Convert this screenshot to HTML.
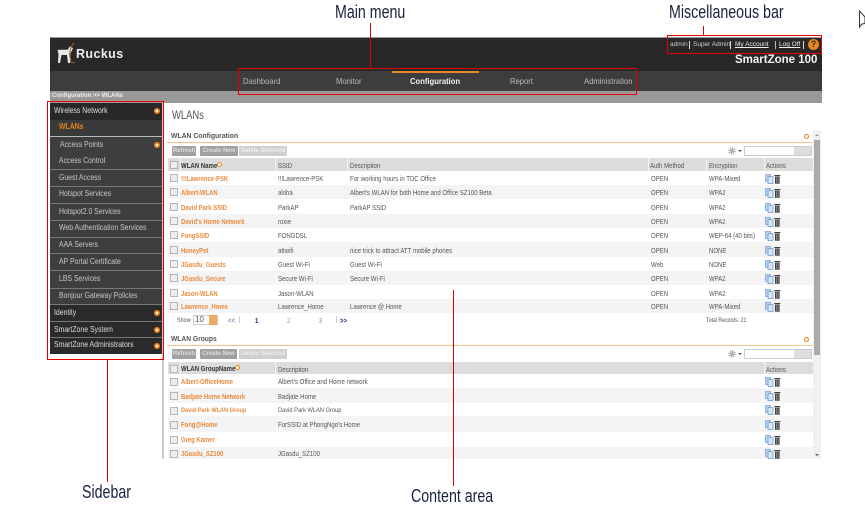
<!DOCTYPE html>
<html><head><meta charset="utf-8"><style>
html,body{margin:0;padding:0;background:#fff}
#p{position:relative;width:865px;height:525px;overflow:hidden;background:#fff;font-family:"Liberation Sans",Arial,sans-serif;color:#444}
#p div,#p span.a,#p svg.a{position:absolute}
.t{position:absolute;white-space:nowrap;line-height:10px;font-size:7px;color:#555;transform-origin:0 50%}
.n{position:absolute;white-space:nowrap;line-height:12px;font-size:8.5px;color:#bbb;top:75px;transform:scaleX(.9);transform-origin:0 50%}
.s{position:absolute;white-space:nowrap;left:58px;line-height:12px;font-size:8px;color:#c8c8c8;transform:scaleX(.86);transform-origin:0 50%}
.h{position:absolute;white-space:nowrap;left:54px;line-height:12px;font-size:8px;color:#ddd;transform:scaleX(.86);transform-origin:0 50%}
.l{position:absolute;left:50px;width:113px;height:1px;background:#777}
.r{position:absolute;left:168px;width:645px}
.cb{position:absolute;left:170px;width:6px;height:6px;border:1px solid #b5b5b5;background:#eee}
.o{position:absolute;white-space:nowrap;left:181px;line-height:10px;font-size:7.2px;font-weight:bold;color:#e98a3e;transform:scaleX(.82);transform-origin:0 50%;margin-top:.5px}
.k{position:absolute;white-space:nowrap;line-height:10px;font-size:7.2px;color:#555;transform:scaleX(.84);transform-origin:0 50%;margin-top:.5px}
.ic{position:absolute;left:765px;width:16px;height:10px}
.b{position:absolute;height:10px;line-height:10px;font-size:6px;font-weight:bold;text-align:center;color:#ddd;background:#a0a0a0;border-radius:1px;white-space:nowrap;overflow:hidden}
.red{position:absolute;border:1px solid #e80000;box-sizing:border-box}
.rl{position:absolute;width:1px;background:#d80000}
.lab{position:absolute;white-space:nowrap;font-size:18px;line-height:20px;color:#16233d;transform:scaleX(.79);transform-origin:0 0}
.dot{position:absolute;width:3px;height:3px;border-radius:50%;background:#fff;border:1.5px solid #ee7f1a;box-sizing:content-box}
.sd{position:absolute;left:154px;width:6px;height:6px;border-radius:50%;background:#f08a24}
.sd:after{content:"";position:absolute;left:2px;top:2px;width:2px;height:2px;background:#fff}
.hs{position:absolute;width:1px;background:#f4f4f4}
</style></head><body><div id="p">
<svg width="0" height="0" style="position:absolute"><defs>
<symbol id="i" viewBox="0 0 16 10"><rect x="0.5" y="0.5" width="5" height="7" fill="#bcd3ee" stroke="#7da6d8" stroke-width=".8"/><rect x="3" y="2.500" width="5" height="7" fill="#d5e4f6" stroke="#6f9ad2" stroke-width=".8"/><path d="M9.300 1h6v1.200h-6zM10 2.800h4.600v6.900h-4.600z" fill="#3e3e3e"/><path d="M11.500 3.300v6M13.100 3.300v6" stroke="#b0b0b0" stroke-width=".6"/></symbol>
<symbol id="g" viewBox="0 0 9 9"><circle cx="4.500" cy="4.500" r="2.500" fill="#b5b5b5"/><circle cx="4.500" cy="4.500" r="3.500" fill="none" stroke="#a8a8a8" stroke-width="1.600" stroke-dasharray="1.500 1.200"/></symbol>
</defs></svg>

<!-- header -->
<div style="left:50px;top:37px;width:772px;height:1px;background:#999"></div>
<div style="left:50px;top:38px;width:772px;height:33px;background:#282828"></div>
<div style="left:50px;top:71px;width:772px;height:20px;background:#3d3d3d"></div>
<div style="left:50px;top:91px;width:772px;height:12px;background:#999"></div>
<svg class="a" style="left:56px;top:42px" width="22" height="24" viewBox="0 0 22 24"><path d="M1.500 8C4 7.500 9 8 12 7.500L13.500 4.500 17 6 16 8.500 14.500 11 14 21H12L11 13H5.500L4 21H2L2.500 12Z" fill="#e8e8e8"/><path d="M18 1L15 5 13.500 12 15 20 19 21" stroke="#a5672a" stroke-width="1" fill="none"/></svg>
<span class="t" style="left:76px;top:46px;font-size:12.500px;line-height:16px;color:#eee;letter-spacing:.4px;font-weight:bold">Ruckus</span>

<span class="t" style="left:670px;top:40px;color:#ccc;font-size:6.500px">admin</span>
<div style="left:689px;top:41px;width:1px;height:8px;background:#ddd"></div>
<span class="t" style="left:693px;top:40px;color:#ccc;font-size:6.500px">Super Admin</span>
<div style="left:730px;top:41px;width:1px;height:8px;background:#ddd"></div>
<span class="t" style="left:735px;top:40px;color:#eee;font-size:6.500px;text-decoration:underline">My Account</span>
<div style="left:775px;top:41px;width:1px;height:8px;background:#bbb"></div>
<span class="t" style="left:779px;top:40px;color:#eee;font-size:6.500px;text-decoration:underline">Log Off</span>
<div style="left:803px;top:41px;width:1px;height:8px;background:#ddd"></div>
<div style="left:808px;top:39px;width:11px;height:11px;border-radius:50%;background:#e58a23;color:#3a2a10;font-size:9px;font-weight:bold;line-height:11px;text-align:center">?</div>
<span class="t" style="left:735px;top:54px;color:#f2f2f2;font-size:11.500px;line-height:13px;font-weight:bold">SmartZone 100</span>

<div style="left:392px;top:71px;width:87px;height:2px;background:#e98a2a"></div>
<span class="n" style="left:243px">Dashboard</span>
<span class="n" style="left:336px">Monitor</span>
<span class="n" style="left:410px;color:#f2f2f2;font-weight:bold">Configuration</span>
<span class="n" style="left:510px">Report</span>
<span class="n" style="left:584px">Administration</span>
<span class="t" style="left:52px;top:91px;color:#eee;font-weight:bold;font-size:6px">Configuration &gt;&gt; WLANs</span>

<!-- sidebar -->
<div style="left:50px;top:103px;width:113px;height:17px;background:#282828"></div>
<div style="left:50px;top:120px;width:113px;height:16px;background:#3a3a3a"></div>
<div style="left:50px;top:136px;width:113px;height:1px;background:#bbb"></div>
<div style="left:50px;top:137px;width:113px;height:167px;background:#3e3e3e"></div>
<div style="left:50px;top:304px;width:113px;height:50px;background:#2a2a2a"></div>
<div class="l" style="top:169px"></div><div class="l" style="top:186px"></div><div class="l" style="top:203px"></div><div class="l" style="top:220px"></div><div class="l" style="top:237px"></div><div class="l" style="top:253px"></div><div class="l" style="top:270px"></div><div class="l" style="top:288px"></div><div class="l" style="top:304px"></div><div class="l" style="top:321px"></div><div class="l" style="top:337px"></div>
<span class="h" style="top:105px">Wireless Network</span><span class="sd" style="top:108px"></span>
<span class="s" style="top:121px;left:59px;color:#e8811f;font-weight:bold">WLANs</span>
<span class="s" style="top:139px;left:60px">Access Points</span><span class="sd" style="top:142px"></span>
<span class="s" style="top:155px;left:59px">Access Control</span>
<span class="s" style="top:172px;left:59px">Guest Access</span>
<span class="s" style="top:188px;left:59px">Hotspot Services</span>
<span class="s" style="top:206px;left:59px">Hotspot2.0 Services</span>
<span class="s" style="top:222px;left:59px">Web Authentication Services</span>
<span class="s" style="top:239px;left:59px">AAA Servers</span>
<span class="s" style="top:256px;left:59px">AP Portal Certificate</span>
<span class="s" style="top:273px;left:59px">LBS Services</span>
<span class="s" style="top:290px;left:59px">Bonjour Gateway Policies</span>
<span class="h" style="top:307px">Identity</span><span class="sd" style="top:310px"></span>
<span class="h" style="top:324px">SmartZone System</span><span class="sd" style="top:327px"></span>
<span class="h" style="top:339px">SmartZone Administrators</span><span class="sd" style="top:343px"></span>
<div style="left:162px;top:103px;width:2px;height:356px;background:#ccc"></div>
<div style="left:163px;top:279px;width:1px;height:5px;background:#333"></div>

<!-- content -->
<span class="t" style="left:172px;top:110px;font-size:11.500px;line-height:13px;color:#555;transform:scaleX(.82)">WLANs</span>
<span class="t" style="left:171px;top:131px;font-weight:bold;font-size:7.200px;color:#555;transform:scaleX(.95)">WLAN Configuration</span>
<div style="left:167px;top:142px;width:646px;height:1px;background:#f6c48a"></div>
<div class="dot" style="left:804px;top:134px"></div>
<div style="left:813px;top:130px;width:8px;height:329px;background:#f0f0f0"></div>
<div style="left:814px;top:140px;width:6px;height:215px;background:#aaa"></div>
<div style="left:815px;top:134px;width:0;height:0;border:2px solid transparent;border-bottom-color:#999;border-top:0"></div>
<div style="left:815px;top:454px;width:0;height:0;border:2px solid transparent;border-top-color:#555;border-bottom:0"></div>

<div class="b" style="left:172px;top:146px;width:24px">Refresh</div>
<div class="b" style="left:200px;top:146px;width:38px">Create New</div>
<div class="b" style="left:239px;top:146px;width:48px;background:#cfcfcf;color:#eee">Delete Selected</div>
<svg class="a" style="left:728px;top:147px" width="8" height="8"><use href="#g"/></svg><div style="left:738px;top:150px;width:0;height:0;border:2px solid transparent;border-top-color:#555;border-bottom:0"></div>
<div style="left:744px;top:146px;width:68px;height:10px;box-sizing:border-box;border:1px solid #c8ccd8;background:#fff"></div>
<div style="left:794px;top:147px;width:17px;height:8px;background:#ddd"></div>

<div class="r" style="top:158px;height:13px;background:#dcdcdc"></div>
<div class="hs" style="left:180px;top:158px;height:13px"></div><div class="hs" style="left:275px;top:158px;height:13px"></div><div class="hs" style="left:347px;top:158px;height:13px"></div><div class="hs" style="left:648px;top:158px;height:13px"></div><div class="hs" style="left:706px;top:158px;height:13px"></div><div class="hs" style="left:764px;top:158px;height:13px"></div>
<div class="cb" style="top:161px"></div>
<span class="k" style="left:181px;top:160px;font-weight:bold;color:#333">WLAN Name</span><div class="dot" style="left:217px;top:162px"></div>
<span class="k" style="left:278px;top:160px">SSID</span><span class="k" style="left:350px;top:160px">Description</span><span class="k" style="left:650px;top:160px">Auth Method</span><span class="k" style="left:709px;top:160px">Encryption</span><span class="k" style="left:766px;top:160px">Actions</span>

<div class="r" style="top:185px;height:14px;background:#f4f4f4"></div>
<div class="r" style="top:214px;height:14px;background:#f4f4f4"></div>
<div class="r" style="top:242px;height:15px;background:#f4f4f4"></div>
<div class="r" style="top:271px;height:14px;background:#f4f4f4"></div>
<div class="r" style="top:299px;height:14px;background:#f4f4f4"></div>

<div class="cb" style="top:174px"></div><span class="o" style="top:173px">!!!Lawrence-PSK</span><span class="k" style="left:278px;top:173px">!!!Lawrence-PSK</span><span class="k" style="left:350px;top:173px">For working hours in TDC Office</span><span class="k" style="left:651px;top:173px">OPEN</span><span class="k" style="left:709px;top:173px">WPA-Mixed</span><svg class="ic" style="top:174px"><use href="#i"/></svg>
<div class="cb" style="top:188px"></div><span class="o" style="top:187px">Albert-WLAN</span><span class="k" style="left:278px;top:187px">aloha</span><span class="k" style="left:350px;top:187px">Albert's WLAN for both Home and Office SZ100 Beta</span><span class="k" style="left:651px;top:187px">OPEN</span><span class="k" style="left:709px;top:187px">WPA2</span><svg class="ic" style="top:188px"><use href="#i"/></svg>
<div class="cb" style="top:203px"></div><span class="o" style="top:202px">David Park SSID</span><span class="k" style="left:278px;top:202px">ParkAP</span><span class="k" style="left:350px;top:202px">ParkAP SSID</span><span class="k" style="left:651px;top:202px">OPEN</span><span class="k" style="left:709px;top:202px">WPA2</span><svg class="ic" style="top:203px"><use href="#i"/></svg>
<div class="cb" style="top:217px"></div><span class="o" style="top:216px">David's Home Network</span><span class="k" style="left:278px;top:216px">roxie</span><span class="k" style="left:651px;top:216px">OPEN</span><span class="k" style="left:709px;top:216px">WPA2</span><svg class="ic" style="top:217px"><use href="#i"/></svg>
<div class="cb" style="top:231px"></div><span class="o" style="top:230px">FongSSID</span><span class="k" style="left:278px;top:230px">FONGDSL</span><span class="k" style="left:651px;top:230px">OPEN</span><span class="k" style="left:709px;top:230px">WEP-64 (40 bits)</span><svg class="ic" style="top:231px"><use href="#i"/></svg>
<div class="cb" style="top:246px"></div><span class="o" style="top:245px">HoneyPot</span><span class="k" style="left:278px;top:245px">attwifi</span><span class="k" style="left:350px;top:245px">nice trick to attract ATT mobile phones</span><span class="k" style="left:651px;top:245px">OPEN</span><span class="k" style="left:709px;top:245px">NONE</span><svg class="ic" style="top:246px"><use href="#i"/></svg>
<div class="cb" style="top:260px"></div><span class="o" style="top:259px">JGasdu_Guests</span><span class="k" style="left:278px;top:259px">Guest Wi-Fi</span><span class="k" style="left:350px;top:259px">Guest Wi-Fi</span><span class="k" style="left:651px;top:259px">Web</span><span class="k" style="left:709px;top:259px">NONE</span><svg class="ic" style="top:260px"><use href="#i"/></svg>
<div class="cb" style="top:274px"></div><span class="o" style="top:273px">JGasdu_Secure</span><span class="k" style="left:278px;top:273px">Secure Wi-Fi</span><span class="k" style="left:350px;top:273px">Secure Wi-Fi</span><span class="k" style="left:651px;top:273px">OPEN</span><span class="k" style="left:709px;top:273px">WPA2</span><svg class="ic" style="top:274px"><use href="#i"/></svg>
<div class="cb" style="top:289px"></div><span class="o" style="top:288px">Jason-WLAN</span><span class="k" style="left:278px;top:288px">Jason-WLAN</span><span class="k" style="left:651px;top:288px">OPEN</span><span class="k" style="left:709px;top:288px">WPA2</span><svg class="ic" style="top:289px"><use href="#i"/></svg>
<div class="cb" style="top:302px"></div><span class="o" style="top:301px">Lawrence_Home</span><span class="k" style="left:278px;top:301px">Lawrence_Home</span><span class="k" style="left:350px;top:301px">Lawrence @ Home</span><span class="k" style="left:651px;top:301px">OPEN</span><span class="k" style="left:709px;top:301px">WPA-Mixed</span><svg class="ic" style="top:302px"><use href="#i"/></svg>

<span class="k" style="left:177px;top:315px;font-size:6.500px">Show</span>
<div style="left:193px;top:315px;width:25px;height:10px;box-sizing:border-box;border:1px solid #c8ccd8;background:#fff;font-size:8px;line-height:8px;padding-left:1px;color:#555">10</div>
<div style="left:209px;top:315px;width:8px;height:10px;background:#f0a860"></div>
<span class="k" style="left:228px;top:315px;color:#8088b8;font-weight:bold">&lt;&lt;</span>
<div style="left:239px;top:316px;width:1px;height:7px;background:#ccc"></div>
<span class="k" style="left:255px;top:315px;color:#202080;font-weight:bold">1</span>
<span class="k" style="left:287px;top:315px;color:#999">2</span>
<span class="k" style="left:319px;top:315px;color:#888">3</span>
<div style="left:336px;top:316px;width:1px;height:7px;background:#ccc"></div>
<span class="k" style="left:340px;top:315px;color:#202080;font-weight:bold">&gt;&gt;</span>
<span class="k" style="left:706px;top:315px;font-size:6.200px">Total Records: 21</span>

<span class="t" style="left:171px;top:334px;font-weight:bold;font-size:7.200px;color:#555;transform:scaleX(.93)">WLAN Groups</span>
<div style="left:167px;top:345px;width:646px;height:1px;background:#f6c48a"></div>
<div class="dot" style="left:804px;top:337px"></div>
<div class="b" style="left:172px;top:349px;width:24px">Refresh</div>
<div class="b" style="left:200px;top:349px;width:37px">Create New</div>
<div class="b" style="left:239px;top:349px;width:48px;background:#cfcfcf;color:#eee">Delete Selected</div>
<svg class="a" style="left:728px;top:350px" width="8" height="8"><use href="#g"/></svg><div style="left:738px;top:353px;width:0;height:0;border:2px solid transparent;border-top-color:#555;border-bottom:0"></div>
<div style="left:744px;top:349px;width:68px;height:10px;box-sizing:border-box;border:1px solid #c8ccd8;background:#fff"></div>
<div style="left:794px;top:350px;width:17px;height:8px;background:#ddd"></div>

<div class="r" style="top:362px;height:12px;background:#dcdcdc"></div>
<div class="hs" style="left:180px;top:362px;height:12px"></div><div class="hs" style="left:275px;top:362px;height:12px"></div><div class="hs" style="left:764px;top:362px;height:12px"></div>
<div class="cb" style="top:365px"></div>
<span class="k" style="left:181px;top:363px;font-weight:bold;color:#333">WLAN GroupName</span><div class="dot" style="left:235px;top:365px"></div>
<span class="k" style="left:278px;top:364px">Description</span><span class="k" style="left:766px;top:364px">Actions</span>

<div class="r" style="top:388px;height:15px;background:#f4f4f4"></div>
<div class="r" style="top:416px;height:16px;background:#f4f4f4"></div>
<div class="r" style="top:447px;height:12px;background:#f4f4f4"></div>

<div class="cb" style="top:378px"></div><span class="o" style="top:376px">Albert-OfficeHome</span><span class="k" style="left:278px;top:376px">Albert's Office and Home network</span><svg class="ic" style="top:377px"><use href="#i"/></svg>
<div class="cb" style="top:392px"></div><span class="o" style="top:391px">Badjate Home Network</span><span class="k" style="left:278px;top:391px">Badjate Home</span><svg class="ic" style="top:391px"><use href="#i"/></svg>
<div class="cb" style="top:407px"></div><span class="o" style="top:405px;font-size:6.800px">David Park WLAN Group</span><span class="k" style="left:278px;top:405px;font-size:6.800px">David Park WLAN Group</span><svg class="ic" style="top:405px"><use href="#i"/></svg>
<div class="cb" style="top:421px"></div><span class="o" style="top:419px">Fong@Home</span><span class="k" style="left:278px;top:419px">ForSSID at PhongNgo's Home</span><svg class="ic" style="top:420px"><use href="#i"/></svg>
<div class="cb" style="top:436px"></div><span class="o" style="top:434px">Greg Kamer</span><svg class="ic" style="top:435px"><use href="#i"/></svg>
<div class="cb" style="top:450px"></div><span class="o" style="top:448px">JGasdu_SZ100</span><span class="k" style="left:278px;top:448px">JGasdu_SZ100</span><svg class="ic" style="top:449px"><use href="#i"/></svg>

<!-- callouts -->
<div class="red" style="left:238px;top:68px;width:399px;height:27px"></div>
<div class="red" style="left:667px;top:35px;width:155px;height:19px"></div>
<div class="red" style="left:47px;top:101px;width:117px;height:259px"></div>
<div class="rl" style="left:370px;top:23px;height:45px"></div>
<div class="rl" style="left:703px;top:26px;height:9px"></div>
<div class="rl" style="left:107px;top:360px;height:122px"></div>
<div class="rl" style="left:453px;top:290px;height:196px"></div>
<span class="lab" style="left:335px;top:2px">Main menu</span>
<span class="lab" style="left:669px;top:2px">Miscellaneous bar</span>
<span class="lab" style="left:82px;top:482px">Sidebar</span>
<span class="lab" style="left:411px;top:486px">Content area</span>
<svg class="a" style="left:859px;top:10px" width="6" height="20" viewBox="0 0 6 20"><path d="M.5 1V17L3 14 6 13.500V7z" fill="#fff" stroke="#333" stroke-width="1"/></svg>
</div></body></html>
